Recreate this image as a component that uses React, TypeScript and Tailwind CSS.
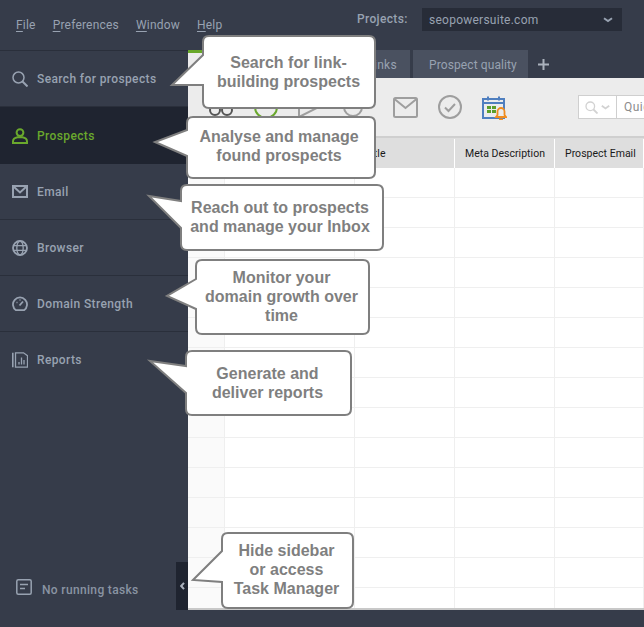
import React from "react";

type C = { x0: number; y0: number; x1: number; y1: number; tx: number; ty: number; a: number; b: number };

const callouts: C[] = [
  { x0: 203, y0: 36, x1: 375, y1: 108, tx: 172, ty: 85, a: 55, b: 85 },
  { x0: 187, y0: 117, x1: 375, y1: 178, tx: 155, ty: 142, a: 130, b: 156 },
  { x0: 181, y0: 185, x1: 383, y1: 250, tx: 149, ty: 196, a: 201, b: 228 },
  { x0: 196, y0: 260, x1: 369, y1: 334, tx: 167, ty: 296, a: 279, b: 309 },
  { x0: 186, y0: 351, x1: 351, y1: 415, tx: 150, ty: 361, a: 366, b: 393 },
  { x0: 222, y0: 533, x1: 353, y1: 608, tx: 193, ty: 580, a: 551, b: 582 },
];

function calloutPath({ x0, y0, x1, y1, tx, ty, a, b }: C) {
  const r = 6;
  return `M${x0 + r} ${y0} H${x1 - r} Q${x1} ${y0} ${x1} ${y0 + r} V${y1 - r} Q${x1} ${y1} ${x1 - r} ${y1} H${x0 + r} Q${x0} ${y1} ${x0} ${y1 - r} V${b} L${tx} ${ty} L${x0} ${a} V${y0 + r} Q${x0} ${y0} ${x0 + r} ${y0} Z`;
}

const ico = "shrink-0 fill-none stroke-current";

function Item({ label, icon, active, last }: { label: string; icon: React.ReactNode; active?: boolean; last?: boolean }) {
  return (
    <div
      className={
        active
          ? "h-[57px] flex items-center pl-[12px] bg-[#1f2430] text-[#6aa82d]"
          : last
            ? "h-[56px] flex items-center pl-[12px] text-[#98a2b1]"
            : "h-[56px] flex items-center pl-[12px] border-b border-[#2a2f3b] text-[#98a2b1]"
      }
    >
      <span className="w-[16px] h-[16px] flex items-center justify-center mr-[9px]">{icon}</span>
      <span className="text-[12px] font-medium tracking-[0.38px]">{label}</span>
    </div>
  );
}

const menu = [
  ["F", "ile"],
  ["P", "references"],
  ["W", "indow"],
  ["H", "elp"],
];

const columns = ["w-[37px]", "w-[130px]", "w-[100px]", "w-[100px]", "flex-1"];
const rowCells = ["bg-[#fafafa]", "", "", "", ""];

export default function App() {
  return (
    <div className="relative w-[644px] h-[627px] overflow-hidden flex bg-[#363c4a] font-['Roboto',sans-serif]">
      <aside className="w-[188px] shrink-0 flex flex-col">
        <div className="h-[51px] border-b border-[#2a2f3b] flex items-center pl-[16px] gap-[17px] text-[12px] text-[#98a2b1] tracking-[0.2px]">
          {menu.map(([a, b]) => (
            <span key={b}>
              <span className="underline underline-offset-2">{a}</span>
              {b}
            </span>
          ))}
        </div>
        <Item
          label="Search for prospects"
          icon={
            <svg width="16" height="16" viewBox="0 0 16 16" className={ico} strokeWidth="1.5">
              <circle cx="6.5" cy="6.5" r="5.500" />
              <path d="M10.5 10.5 15.5 15.5" strokeWidth="2" />
            </svg>
          }
        />
        <Item
          active
          label="Prospects"
          icon={
            <svg width="16" height="16" viewBox="0 0 16 16" className={ico} strokeWidth="2">
              <circle cx="8" cy="4.6" r="3.4" />
              <path d="M1 15v-1.5C1 11 3.5 9.6 5.5 9.3h5c2 .3 4.500 1.700 4.500 4.200V15Z" />
            </svg>
          }
        />
        <Item
          label="Email"
          icon={
            <svg width="16" height="13" viewBox="0 0 16 13" className={ico} strokeWidth="2">
              <rect x="1" y="1" width="14" height="11" />
              <path d="M1.500 1.500 8 7.500 14.500 1.500" />
            </svg>
          }
        />
        <Item
          label="Browser"
          icon={
            <svg width="16" height="16" viewBox="0 0 16 16" className={ico} strokeWidth="1.300">
              <circle cx="8" cy="8" r="7" strokeWidth="1.800" />
              <ellipse cx="8" cy="8" rx="3.200" ry="7" />
              <path d="M1 5.600h14M1 10.400h14" />
            </svg>
          }
        />
        <Item
          label="Domain Strength"
          icon={
            <svg width="16" height="16" viewBox="0 0 16 16" className={ico} strokeWidth="1.800">
              <path d="M4 14.200a7 7 0 1 1 8 0Z" />
              <path d="M7.500 9.500 11 5.500" />
              <path d="M4.500 6.500h1M7.500 4h1" strokeWidth="1.300" />
            </svg>
          }
        />
        <Item
          last
          label="Reports"
          icon={
            <svg width="16" height="16" viewBox="0 0 16 16" className={ico} strokeWidth="1.300">
              <path d="M.8 .8V15.200" strokeWidth="1.600" />
              <path d="M3.500 .8h8l4 3V15.200h-12Z" />
              <path d="M7 12.500V10M9.500 12.500V5.500M12 12.500V8" />
            </svg>
          }
        />
        <div className="mt-auto h-[48px] flex items-start pl-[16px] text-[#8a94a3]">
          <svg width="16" height="16" viewBox="0 0 16 16" className={ico + " text-[#98a2b1]"} strokeWidth="1.500">
            <rect x="0.8" y="0.8" width="14.400" height="14.400" rx="1.500" />
            <path d="M4 5.500h8M4 9.500h5" />
          </svg>
          <span className="ml-[10px] mt-[2px] text-[12px] font-medium tracking-[0.34px]">No running tasks</span>
        </div>
      </aside>

      <main className="flex-1 min-w-0 flex flex-col pb-[17px]">
        <div className="h-[50px] shrink-0 flex items-start pt-[8px] pl-[169px]">
          <span className="text-[12px] font-medium text-[#98a2b1] leading-[23px] tracking-[0.35px] w-[65px]">Projects:</span>
          <div className="w-[200px] h-[23px] bg-[#272c38] flex items-center justify-between pl-[7px] pr-[9px] text-[12px] tracking-[0.25px] text-[#98a2b1]">
            <span>seopowersuite.com</span>
            <svg width="10" height="6" viewBox="0 0 10 6" className={ico} strokeWidth="2">
              <path d="M1 1.200 5 4 9 1.200" />
            </svg>
          </div>
        </div>

        <div className="h-[28px] shrink-0 flex items-stretch">
          <div className="w-[125px] bg-[#ececec] border-t-[3px] border-[#69a82a]" />
          <div className="w-[97px] bg-[#4a5160] flex items-center justify-end pr-[13px] pt-[1px] text-[12px] text-[#98a2b1] tracking-[0.3px]">Links</div>
          <div className="ml-[3px] w-[115px] bg-[#4a5160] flex items-center pl-[16px] pt-[1px] text-[12px] text-[#98a2b1] tracking-[0.1px]">Prospect quality</div>
          <div className="ml-[8px] w-[14px] flex items-center justify-center text-[#aab1bc]">
            <svg width="11" height="11" viewBox="0 0 11 11" className={ico} strokeWidth="2">
              <path d="M5.500 0v11M0 5.500h11" />
            </svg>
          </div>
        </div>

        <div className="h-[58px] shrink-0 bg-[#ececec] flex items-center relative overflow-hidden text-[#9e9e9e]">
          <svg width="24" height="12" viewBox="0 0 24 12" className={ico + " absolute left-[21px] top-[26px] text-[#555]"} strokeWidth="2">
            <circle cx="6" cy="6" r="5" />
            <circle cx="18" cy="6" r="5" />
          </svg>
          <svg width="24" height="24" viewBox="0 0 24 24" className={ico + " absolute left-[66px] top-[17px] text-[#6aa82d]"} strokeWidth="2">
            <circle cx="12" cy="12" r="11" />
            <path d="M12 7v6" />
          </svg>
          <svg width="22" height="22" viewBox="0 0 22 22" className={ico + " absolute left-[110px] top-[18px]"} strokeWidth="2">
            <path d="M1 1v20l20-10Z" />
          </svg>
          <svg width="22" height="22" viewBox="0 0 22 22" className={ico + " absolute left-[154px] top-[18px]"} strokeWidth="2">
            <circle cx="11" cy="11" r="9" />
          </svg>
          <svg width="25" height="21" viewBox="0 0 25 21" className={ico + " absolute left-[205px] top-[19px]"} strokeWidth="2">
            <rect x="1" y="1" width="23" height="19" rx="1.500" />
            <path d="M1.500 2 12.500 11 23.500 2" />
          </svg>
          <svg width="24" height="24" viewBox="0 0 24 24" className={ico + " absolute left-[250px] top-[17px]"} strokeWidth="2">
            <circle cx="12" cy="12" r="11" />
            <path d="M7 12.500 10.500 16 17 9" />
          </svg>
          <svg width="25" height="25" viewBox="0 0 25 25" className="absolute left-[294px] top-[17px] fill-none">
            <path d="M1 4h21v19H1Z" stroke="#4f7fbf" strokeWidth="2" />
            <path d="M1 8h21M6 1.500v4M17 1.500v4" stroke="#4f7fbf" strokeWidth="2" />
            <path d="M5 11h4v3H5ZM10 11h4v3h-4ZM5 15h4v3H5ZM10 15h4v3h-4Z" fill="#5b9f2a" />
            <path d="M14 22h10l-1.500-2v-3.500a3.500 3.500 0 0 0-7 0V20Z" fill="#ececec" stroke="#f08c1e" strokeWidth="1.800" />
            <path d="M17 24.200h4" stroke="#f08c1e" strokeWidth="1.500" />
          </svg>
          <div className="absolute left-[390px] top-[17px] w-[80px] h-[24px] bg-white border border-[#cfcfcf] flex items-center">
            <div className="w-[38px] h-full border-r border-[#cfcfcf] flex items-center justify-center gap-[3px] text-[#d2d2d2]">
              <svg width="13" height="13" viewBox="0 0 13 13" className={ico} strokeWidth="1.300">
                <circle cx="5.300" cy="5.300" r="4.300" />
                <path d="M8.500 8.500 12.500 12.500" strokeWidth="1.800" />
              </svg>
              <svg width="9" height="5" viewBox="0 0 9 5" className={ico} strokeWidth="1.800">
                <path d="M.8 .8 4.500 3.500 8.200 .8" />
              </svg>
            </div>
            <span className="pl-[7px] text-[12px] text-[#8c8c8c] tracking-[0.5px] whitespace-nowrap">Quick</span>
          </div>
        </div>

        <div className="h-[2px] shrink-0 bg-[#cfcfcf]" />

        <div className="h-[30px] shrink-0 flex bg-[#dedede] text-[10.5px] text-[#1a1a1a] tracking-[0.02px] pt-[1px]">
          {columns.map((c, i) => (
            <div key={i} className={c + " border-r border-white flex items-center pl-[10px] whitespace-nowrap"}>
              {["", "", "Title", "Meta Description", "Prospect Email"][i]}
            </div>
          ))}
        </div>

        <div className="flex-1 min-h-0 bg-white border-b-2 border-[#c8c8c8] overflow-hidden flex flex-col">
          {Array.from({ length: 15 }).map((_, r) => (
            <div key={r} className="h-[30px] shrink-0 flex border-b border-[#efefef]">
              {columns.map((c, i) => (
                <div key={i} className={c + " border-r border-[#efefef] " + rowCells[i]} />
              ))}
            </div>
          ))}
        </div>
      </main>

      <div className="absolute left-[176px] top-[562px] w-[12px] h-[48px] bg-[#1f2430] flex items-center justify-center text-[#aab1bc]">
        <svg width="5" height="8" viewBox="0 0 5 8" className={ico} strokeWidth="2">
          <path d="M4 .8 1.200 4 4 7.200" />
        </svg>
      </div>

      <svg width="644" height="627" viewBox="0 0 644 627" className="absolute inset-0">
        {callouts.map((c, i) => (
          <path key={i} d={calloutPath(c)} fill="#ffffff" stroke="#7f7f7f" strokeWidth="2" />
        ))}
      </svg>

      <div className="absolute left-[203px] top-[36px] w-[172px] h-[72px] pr-[1px] flex items-center justify-center text-center text-[16px] leading-[19px] font-bold text-[#7f7f7f] font-['Liberation_Sans',sans-serif]">
        Search for link-<br />building prospects
      </div>
      <div className="absolute left-[187px] top-[117px] w-[188px] h-[61px] pr-[4px] pb-[4px] flex items-center justify-center text-center text-[16px] leading-[19px] font-bold text-[#7f7f7f] font-['Liberation_Sans',sans-serif]">
        Analyse and manage<br />found prospects
      </div>
      <div className="absolute left-[181px] top-[185px] w-[202px] h-[65px] pr-[4px] pb-[2px] flex items-center justify-center text-center text-[16px] leading-[19px] font-bold text-[#7f7f7f] font-['Liberation_Sans',sans-serif]">
        Reach out to prospects<br />and manage your Inbox
      </div>
      <div className="absolute left-[196px] top-[260px] w-[173px] h-[74px] pr-[2px] pb-[2px] flex items-center justify-center text-center text-[16px] leading-[19px] font-bold text-[#7f7f7f] font-['Liberation_Sans',sans-serif]">
        Monitor your<br />domain growth over<br />time
      </div>
      <div className="absolute left-[186px] top-[351px] w-[165px] h-[64px] pr-[2px] flex items-center justify-center text-center text-[16px] leading-[19px] font-bold text-[#7f7f7f] font-['Liberation_Sans',sans-serif]">
        Generate and<br />deliver reports
      </div>
      <div className="absolute left-[222px] top-[533px] w-[131px] h-[75px] pr-[2px] pb-[2px] flex items-center justify-center text-center text-[16px] leading-[19px] font-bold text-[#7f7f7f] font-['Liberation_Sans',sans-serif]">
        Hide sidebar<br />or access<br />Task Manager
      </div>
    </div>
  );
}
